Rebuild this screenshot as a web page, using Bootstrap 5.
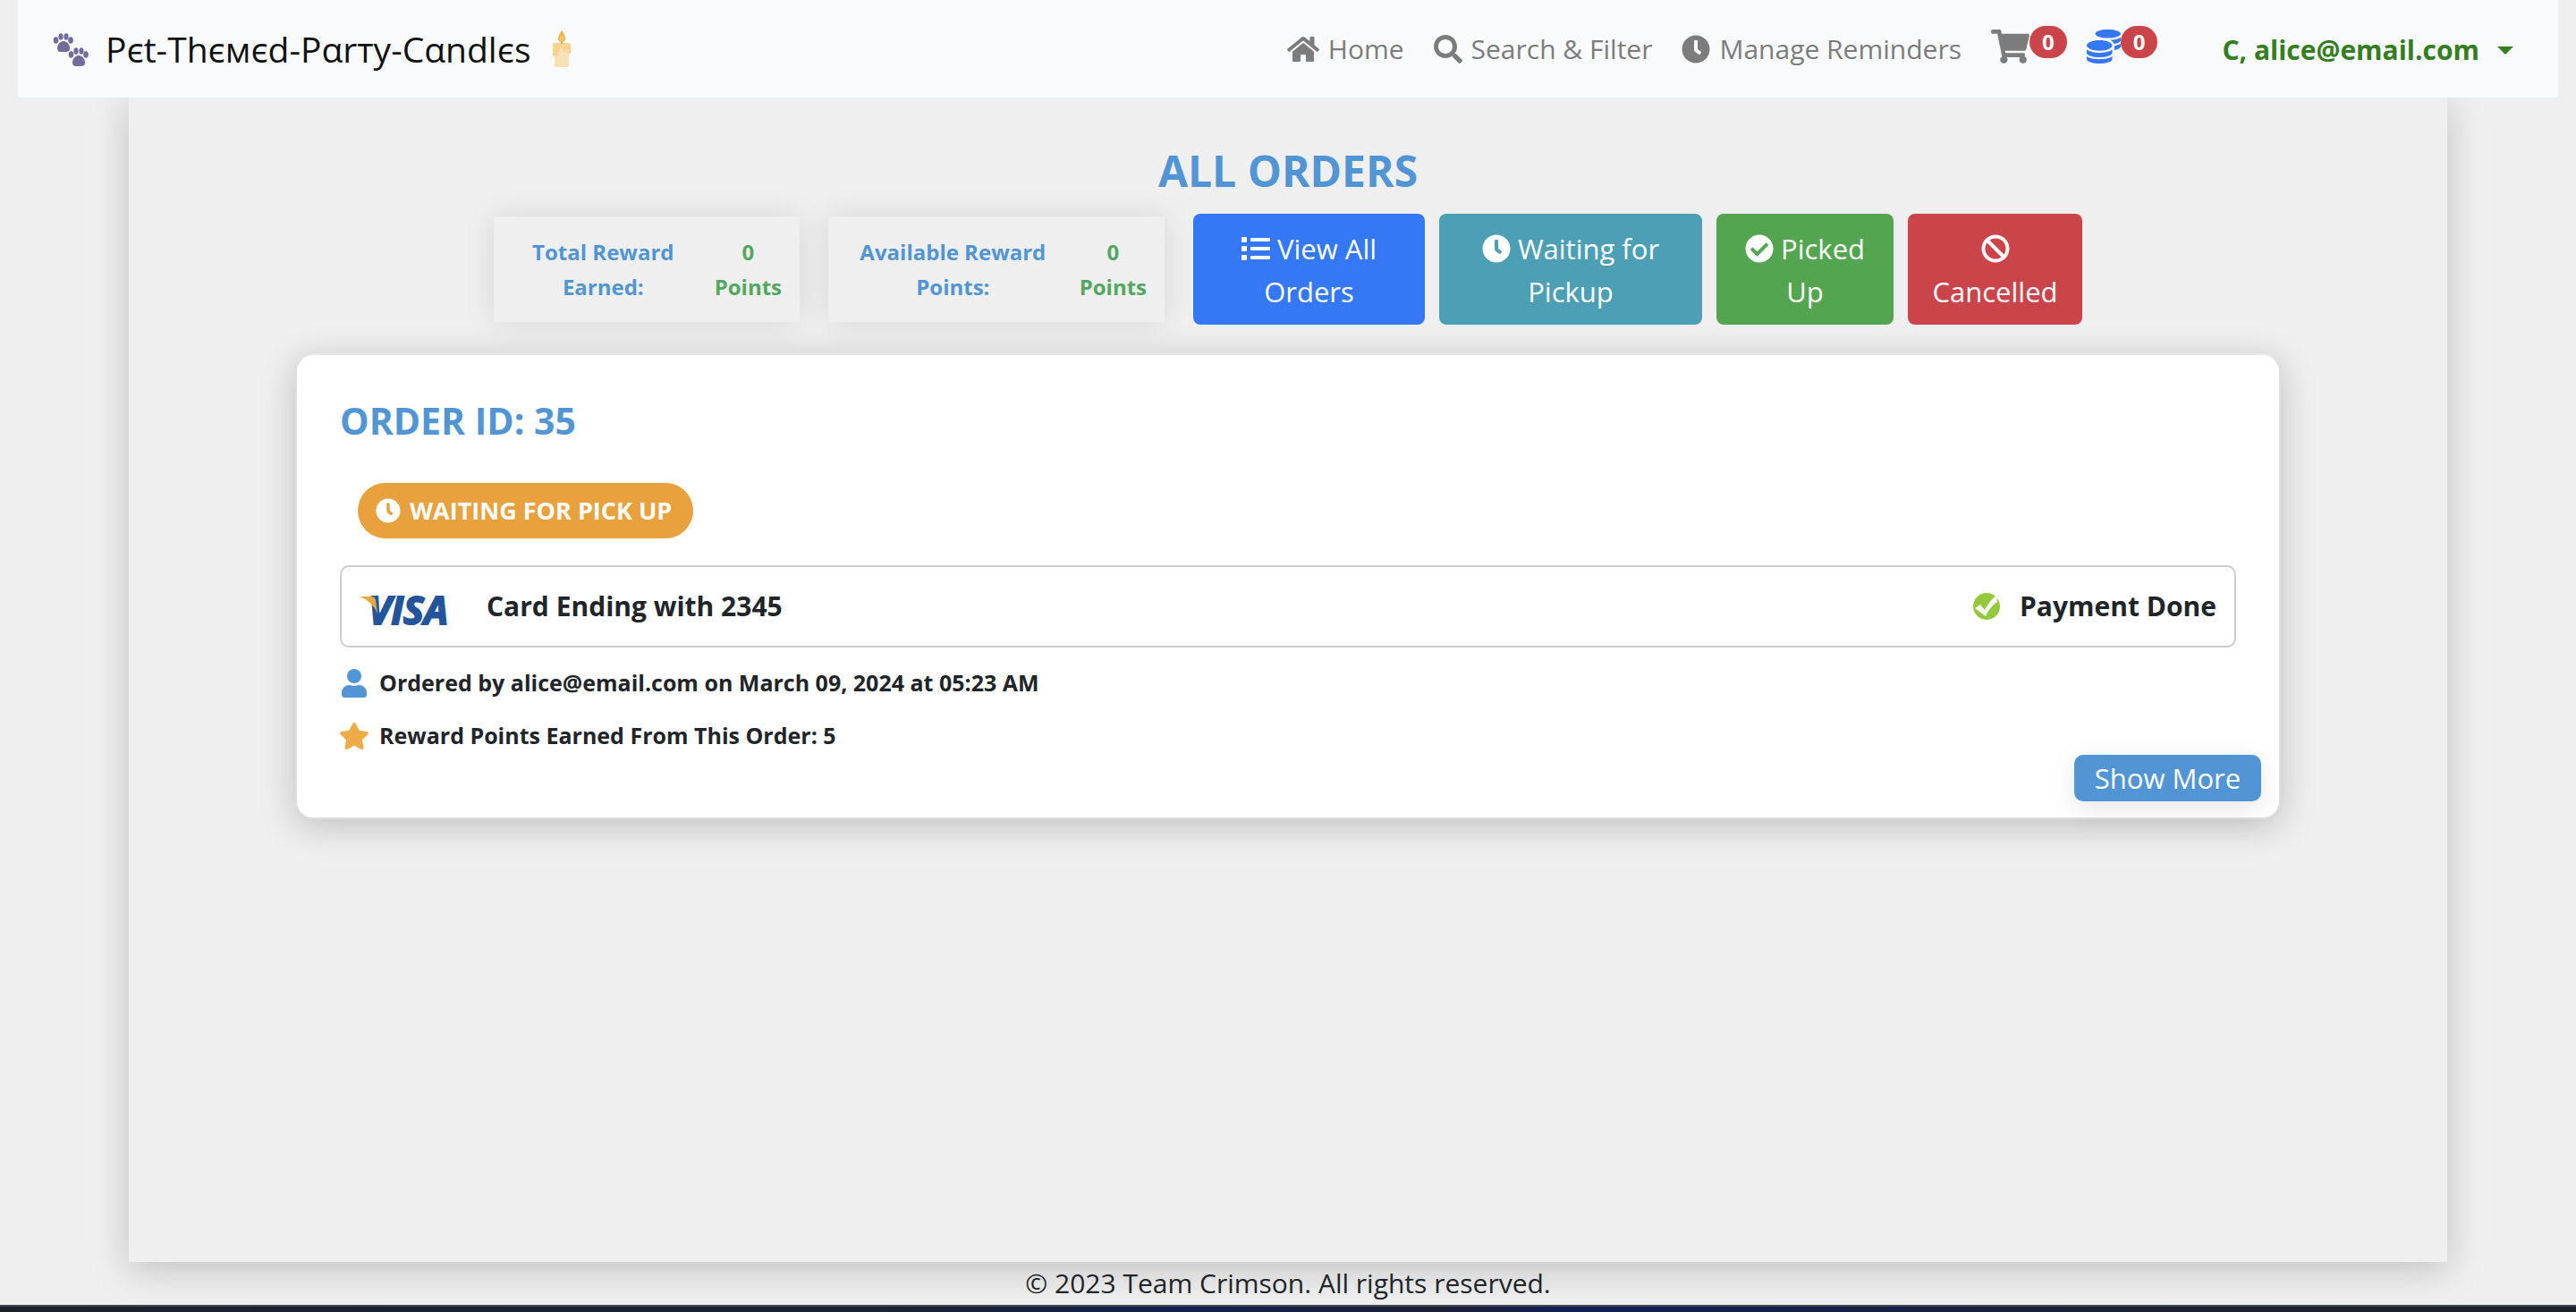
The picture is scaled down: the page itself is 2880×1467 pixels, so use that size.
<!DOCTYPE html>
<html lang="en">
<head>
<meta charset="utf-8">
<meta name="viewport" content="width=device-width, initial-scale=1">
<title>All Orders</title>
<link href="https://cdn.jsdelivr.net/npm/bootstrap@5.3.0/dist/css/bootstrap.min.css" rel="stylesheet">
<style>
  body { font-family: "Open Sans", "Noto Sans", sans-serif; font-size: 30px; line-height: 48px; background: #efefef; color: #212529; }
  .ico { fill: currentColor; flex: none; }
  .topbar { margin: 0 20px; padding: 0 50px 0 38px; height: 109px; background: #f8fafc; position: relative; z-index: 1; }
  .brand-name { font-size: 39px; color: #111; gap: 18px; }
  .brand-name .brand-text { margin-right: 6px; }
  .site-links { gap: 33px; color: #7c7c7c; }
  .site-links a { color: inherit; }
  .site-links .nav-item-link { gap: 10px; }
  .counter { color: #7c7c7c; padding-bottom: 5px; }
  .counter .badge { font-size: 24px; line-height: 24px; padding: 6px 14px; background: #cb444a; border-radius: 20px; margin-bottom: 10px; }
  .coins { color: #3478f6; margin-left: 22px; }
  .user-menu { color: #347d21; font-weight: 700; font-size: 30px; line-height: 48px; margin-left: 60px; }
  .user-menu::after { margin-left: 20px; vertical-align: 6px; border-width: 9px 9px 0; }
  .page-panel { margin: 0 5%; padding: 54px 0 40px; box-shadow: 0 8px 40px rgba(0,0,0,.2); }
  .page-title { font-size: 48px; line-height: 56px; font-weight: 700; color: #5295d5; margin-bottom: 20px; }
  .filters { gap: 16px; }
  .reward { margin-right: 16px; padding: 20px; gap: 22px; font-size: 24px; line-height: 39px; font-weight: 700; color: #5295d5; box-shadow: 0 0 32px rgba(0,0,0,.1); text-align: center; }
  .reward-total { width: 342px; }
  .reward-avail { width: 376px; }
  .reward .pts { color: #54a75f; }
  .filter-btn { font-size: 31px; line-height: 48px; padding: 13px 20px 11px; border-width: 2px; border-radius: 8px; color: #fff; }
  .filter-btn .ico { vertical-align: -4px; }
  .w-view { width: 259px; background: #3478f6; }
  .w-wait { width: 294px; background: #4c9fb5; }
  .w-pick { width: 198px; background: #54a550; }
  .w-canc { width: 195px; background: #cb444a; }
  .order { width: 86%; max-width: 2220px; margin: 32px auto 0; padding: 47px 48px 18px; border: 2px solid #dedede; border-top-color: #e6e6e6; border-radius: 20px; box-shadow: 0 8px 40px rgba(0,0,0,.2); }
  .order-title { font-size: 41px; line-height: 52px; font-weight: 700; color: #5295d5; margin-bottom: 44px; }
  .status-pill { margin-left: 20px; padding: 7px 24px 7px 20px; gap: 10px; font-size: 27px; line-height: 48px; font-weight: 700; color: #fff; background: #e8a13c; border-radius: 31px; }
  .payment { margin-top: 30px; padding: 20px; border: 2px solid #ccc; border-radius: 10px; font-size: 30px; line-height: 48px; font-weight: 700; }
  .payment .method { gap: 34px; }
  .payment .visa { margin: -6px 0; }
  .payment .paid { gap: 22px; }
  .info { margin-top: 20px; gap: 12px; font-size: 25px; line-height: 39px; font-weight: 700; }
  .more-btn { font-size: 31px; line-height: 52px; padding: 0; width: 209px; margin: 2px -28px 0 0; color: #fff; background: #5295d5; border: 0; border-radius: 10px; box-shadow: 0 8px 32px rgba(0,0,0,.1); }
  .desk-edge { height: 8px; border-top: 2px solid #40464e; background: linear-gradient(90deg, #1c222a 0%, #1a2031 12%, #1b2333 34%, #112050 46%, #1e2038 56%, #112058 61%, #14204a 70%, #1c2030 85%, #1c222a 100%); }
</style>
</head>
<body class="min-vh-100 d-flex flex-column">

<nav class="topbar d-flex align-items-center justify-content-between">
  <a class="brand-name d-flex align-items-center text-decoration-none" href="#">
    <svg width="42" height="38" viewBox="0 0 42 38" fill="#736a9e" aria-hidden="true">
      <g id="paw"><ellipse cx="4.500" cy="9" rx="2.800" ry="3.800"/><ellipse cx="10" cy="5" rx="2.600" ry="3.800"/><ellipse cx="16" cy="5" rx="2.600" ry="3.800"/><ellipse cx="21" cy="9" rx="2.800" ry="3.800"/><path d="M13 10c4 0 7 4 7 8 0 3-2 4-4 4h-6c-2 0-4-1-4-4 0-4 3-8 7-8z"/></g>
      <use href="#paw" x="17" y="16"/>
    </svg>
    <span class="brand-text">Pєt-Thємєd-Pαrтy-Cαndlєs</span>
    <svg width="20" height="42" viewBox="0 0 20 42" aria-hidden="true">
      <path fill="#f7e2b5" d="M2 18h16v22q0 1-1 1H3q-1 0-1-1z"/>
      <path fill="#f9d48f" d="M3 14h14q3 0 3 3v7q0 2-2 2t-2-2v-1q0-2-1-2t-1 2q0 1-1 1t-1-2q0-3-2-3t-2 3q0 2-1 2t-1-1v4q0 2-3 2t-3-2V17q0-3 3-3z"/>
      <path stroke="#998b78" stroke-width="1.500" d="M10 10v5"/>
      <path fill="#f0b24d" d="M10 0c2 3 4 6 4 9s-2 4-4 4-4-1-4-4 2-6 4-9z"/><ellipse cx="10" cy="9" rx="2" ry="2.800" fill="#f6cf5a"/>
    </svg>
  </a>
  <div class="d-flex align-items-center">
    <div class="site-links d-flex align-items-center">
      <a class="nav-item-link d-flex align-items-center text-decoration-none" href="#"><svg class="ico" width="36" height="32" viewBox="0 0 576 512"><path d="M280.37 148.26L96 300.11V464a16 16 0 0 0 16 16l112.06-.29a16 16 0 0 0 15.92-16V368a16 16 0 0 1 16-16h64a16 16 0 0 1 16 16v95.64a16 16 0 0 0 16 16.05L464 480a16 16 0 0 0 16-16V300L295.67 148.26a12.19 12.19 0 0 0-15.3 0zM571.6 251.47L488 182.56V44.05a12 12 0 0 0-12-12h-56a12 12 0 0 0-12 12v72.61L318.47 43a48 48 0 0 0-61 0L4.34 251.47a12 12 0 0 0-1.6 16.9l25.5 31A12 12 0 0 0 45.15 301l235.22-193.74a12.19 12.19 0 0 1 15.3 0L530.9 301a12 12 0 0 0 16.9-1.6l25.5-31a12 12 0 0 0-1.7-16.93z"/></svg>Home</a>
      <a class="nav-item-link d-flex align-items-center text-decoration-none" href="#"><svg class="ico" width="32" height="32" viewBox="0 0 512 512"><path d="M505 442.7L405.3 343c-4.500-4.500-10.600-7-17-7H372c27.600-35.300 44-79.700 44-128C416 93.100 322.900 0 208 0S0 93.100 0 208s93.100 208 208 208c48.300 0 92.700-16.400 128-44v16.300c0 6.400 2.500 12.500 7 17l99.700 99.700c9.400 9.400 24.600 9.400 33.900 0l28.300-28.300c9.400-9.400 9.400-24.600.1-34zM208 336c-70.700 0-128-57.200-128-128 0-70.700 57.200-128 128-128 70.700 0 128 57.200 128 128 0 70.700-57.200 128-128 128z"/></svg>Search &amp; Filter</a>
      <a class="nav-item-link d-flex align-items-center text-decoration-none" href="#"><svg class="ico" width="32" height="32" viewBox="0 0 512 512"><path id="clock" d="M256,8C119,8,8,119,8,256S119,504,256,504,504,393,504,256,393,8,256,8Zm92.490,313h0l-20,25a16,16,0,0,1-22.490,2.500h0l-67-49.720a40,40,0,0,1-15-31.230V112a16,16,0,0,1,16-16h32a16,16,0,0,1,16,16V256l58,42.500A16,16,0,0,1,348.490,321Z"/></svg>Manage Reminders</a>
      <a class="counter d-flex align-items-center text-decoration-none" href="#" aria-label="Cart"><svg class="ico" width="43" height="38" viewBox="0 0 576 512"><path d="M528.12 301.319l47.273-208C578.806 78.301 567.391 64 551.990 64H159.208l-9.166-44.810C147.758 8.021 137.930 0 126.529 0H24C10.745 0 0 10.745 0 24v16c0 13.255 10.745 24 24 24h69.883l70.248 343.435C147.325 417.100 136 435.222 136 456c0 30.928 25.072 56 56 56s56-25.072 56-56c0-15.674-6.447-29.835-16.824-40h209.647C430.447 426.165 424 440.326 424 456c0 30.928 25.072 56 56 56s56-25.072 56-56c0-22.172-12.888-41.332-31.579-50.405l5.517-24.276c3.413-15.018-8.002-29.319-23.403-29.319H218.117l-6.545-32h293.145c11.206 0 20.920-7.754 23.403-18.681z"/></svg><span class="badge">0</span></a>
    </div>
    <a class="counter coins d-flex align-items-center text-decoration-none" href="#" aria-label="Points"><svg class="ico" width="38" height="38" viewBox="0 0 512 512"><path d="M0 405.300V448c0 35.300 86 64 192 64s192-28.700 192-64v-42.700C342.700 434.400 267.200 448 192 448S41.300 434.400 0 405.300zM320 128c106 0 192-28.700 192-64S426 0 320 0 128 28.700 128 64s86 64 192 64zM0 300.400V352c0 35.300 86 64 192 64s192-28.700 192-64v-51.600c-41.300 34-116.900 51.600-192 51.600S41.300 334.400 0 300.400zm416 11c57.300-11.100 96-31.700 96-55.400v-42.700c-23.200 16.400-57.300 27.600-96 34.500v63.600zM192 160C86 160 0 195.800 0 240s86 80 192 80 192-35.800 192-80-86-80-192-80zm219.300 56.300c60-10.800 100.700-32 100.700-56.300v-42.700c-35.500 25.100-96.500 38.600-160.700 41.800 29.500 14.300 51.200 33.500 60 57.200z"/></svg><span class="badge">0</span></a>
    <div class="dropdown">
      <button class="user-menu dropdown-toggle btn border-0 py-0 pe-0" type="button" data-bs-toggle="dropdown">C, alice@email.com</button>
    </div>
  </div>
</nav>

<main class="page-panel flex-grow-1">
  <h1 class="page-title text-center">ALL ORDERS</h1>
  <div class="filters d-flex justify-content-center align-items-center">
    <div class="reward reward-total d-flex justify-content-between">
      <div class="flex-grow-1">Total Reward<br>Earned:</div><div class="pts">0<br>Points</div>
    </div>
    <div class="reward reward-avail d-flex justify-content-between">
      <div class="flex-grow-1">Available Reward<br>Points:</div><div class="pts">0<br>Points</div>
    </div>
    <button class="btn filter-btn w-view" type="button"><svg class="ico" width="32" height="32" viewBox="0 0 512 512"><path d="M80 368H16a16 16 0 0 0-16 16v64a16 16 0 0 0 16 16h64a16 16 0 0 0 16-16v-64a16 16 0 0 0-16-16zm0-320H16A16 16 0 0 0 0 64v64a16 16 0 0 0 16 16h64a16 16 0 0 0 16-16V64a16 16 0 0 0-16-16zm0 160H16a16 16 0 0 0-16 16v64a16 16 0 0 0 16 16h64a16 16 0 0 0 16-16v-64a16 16 0 0 0-16-16zm416 176H176a16 16 0 0 0-16 16v32a16 16 0 0 0 16 16h320a16 16 0 0 0 16-16v-32a16 16 0 0 0-16-16zm0-320H176a16 16 0 0 0-16 16v32a16 16 0 0 0 16 16h320a16 16 0 0 0 16-16V80a16 16 0 0 0-16-16zm0 160H176a16 16 0 0 0-16 16v32a16 16 0 0 0 16 16h320a16 16 0 0 0 16-16v-32a16 16 0 0 0-16-16z"/></svg> View All<br>Orders</button>
    <button class="btn filter-btn w-wait" type="button"><svg class="ico" width="32" height="32" viewBox="0 0 512 512"><use href="#clock"/></svg> Waiting for<br>Pickup</button>
    <button class="btn filter-btn w-pick" type="button"><svg class="ico" width="32" height="32" viewBox="0 0 512 512"><path d="M504 256c0 136.967-111.033 248-248 248S8 392.967 8 256 119.033 8 256 8s248 111.033 248 248zM227.314 387.314l184-184c6.248-6.248 6.248-16.379 0-22.627l-22.627-22.627c-6.248-6.249-16.379-6.249-22.628 0L216 308.118l-70.059-70.059c-6.248-6.248-16.379-6.248-22.628 0l-22.627 22.627c-6.248 6.248-6.248 16.379 0 22.627l104 104c6.249 6.249 16.379 6.249 22.628.001z"/></svg> Picked<br>Up</button>
    <button class="btn filter-btn w-canc px-0" type="button"><svg class="ico" width="32" height="32" viewBox="0 0 512 512"><path d="M256 8C119.034 8 8 119.033 8 256s111.034 248 248 248 248-111.034 248-248S392.967 8 256 8zm130.108 117.892c65.448 65.448 70 165.481 20.677 235.637L150.470 105.216c70.204-49.356 170.226-44.735 235.638 20.676zM125.892 386.108c-65.448-65.448-70-165.481-20.677-235.637L361.530 406.784c-70.203 49.356-170.226 44.736-235.638-20.676z"/></svg><br>Cancelled</button>
  </div>

  <section class="order bg-white">
    <h2 class="order-title">ORDER ID: 35</h2>
    <div class="d-flex"><span class="status-pill d-flex align-items-center"><svg class="ico" width="28" height="28" viewBox="0 0 512 512"><use href="#clock"/></svg>WAITING FOR PICK UP</span></div>
    <div class="payment d-flex align-items-center justify-content-between">
      <div class="method d-flex align-items-center">
        <svg class="visa" width="108" height="60" viewBox="0 -15 108 60" role="img" aria-label="Visa">
          <text x="10" y="35" font-family="Open Sans, sans-serif" font-size="43" font-weight="700" font-style="italic" fill="#24549a" stroke="#24549a" stroke-width="2">VISA</text>
          <path fill="#e9a93f" d="M0 4h13q4 0 5 4l2 15Q14 9 0 4z"/>
        </svg>
        <span>Card Ending with 2345</span>
      </div>
      <div class="paid d-flex align-items-center">
        <svg width="30" height="30" viewBox="0 0 30 30" aria-hidden="true"><circle cx="15" cy="15" r="15" fill="#94c93d"/><path fill="#fff" d="M2 17l6-4 5 6C17 12 20 7 26 3l1 7c-6 4-10 9-13 16z"/></svg>
        <span>Payment Done</span>
      </div>
    </div>
    <div class="info d-flex align-items-center"><svg class="ico" width="32" height="32" viewBox="-32 0 512 512" color="#5295d5"><path d="M224 256c70.700 0 128-57.300 128-128S294.700 0 224 0 96 57.300 96 128s57.300 128 128 128zm89.600 32h-16.700c-22.200 10.200-46.900 16-72.900 16s-50.600-5.800-72.900-16h-16.700C60.200 288 0 348.200 0 422.400V464c0 26.500 21.500 48 48 48h352c26.500 0 48-21.500 48-48v-41.600c0-74.200-60.200-134.400-134.400-134.400z"/></svg>Ordered by alice@email.com on March 09, 2024 at 05:23 AM</div>
    <div class="info d-flex align-items-center"><svg class="ico" width="32" height="32" viewBox="16 0 544 512" color="#eeac46"><path d="M259.300 17.800L194 150.200 47.900 171.500c-26.200 3.800-36.700 36.100-17.700 54.600l105.700 103-25 145.500c-4.500 26.300 23.200 46 46.400 33.700L288 439.600l130.700 68.700c23.200 12.200 50.900-7.400 46.400-33.700l-25-145.500 105.700-103c19-18.500 8.500-50.800-17.700-54.600L382 150.200 316.700 17.800c-11.700-23.600-45.600-23.900-57.400 0z"/></svg>Reward Points Earned From This Order: 5</div>
    <div class="d-flex justify-content-end"><button class="more-btn" type="button">Show More</button></div>
  </section>
</main>

<footer class="text-center">© 2023 Team Crimson. All rights reserved.</footer>
<div class="desk-edge"></div>

<script src="https://cdn.jsdelivr.net/npm/bootstrap@5.3.0/dist/js/bootstrap.bundle.min.js"></script>
</body>
</html>
